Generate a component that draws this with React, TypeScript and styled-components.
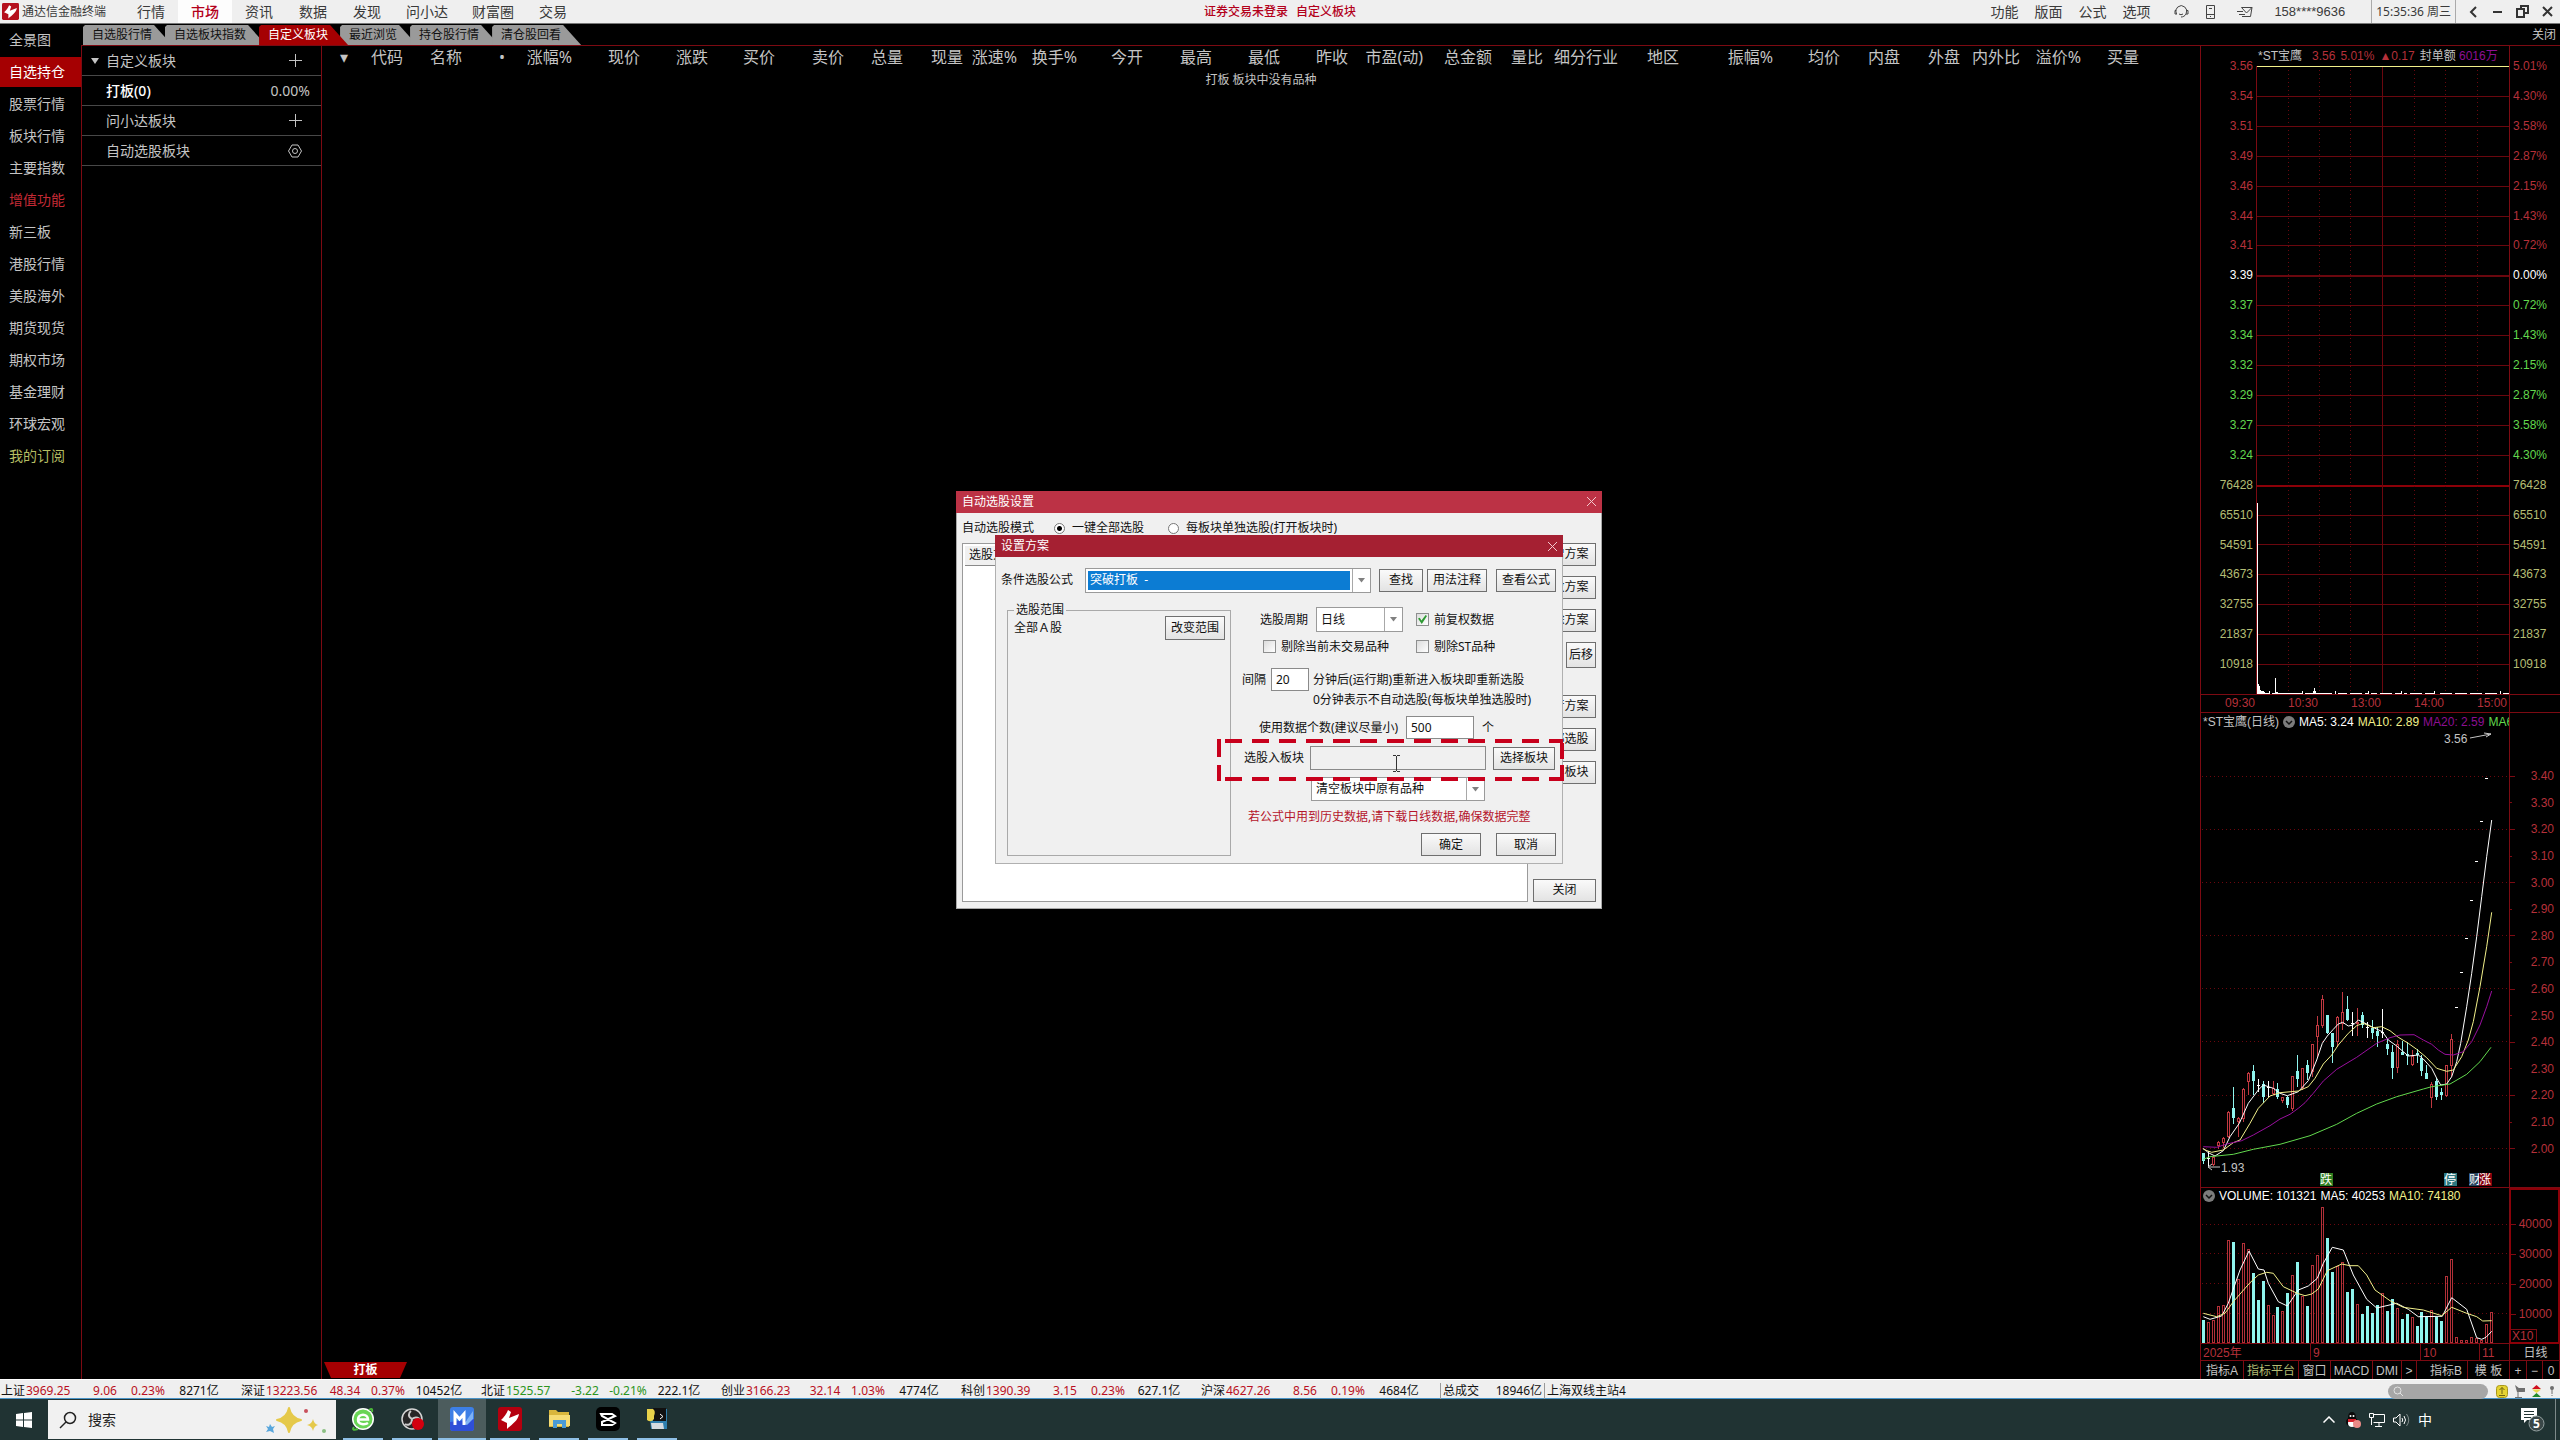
import React from "react";
import styled, { createGlobalStyle, css } from "styled-components";

const SANS = `"Noto Sans", "Noto Sans CJK SC", sans-serif`;
const PIXEL = `"Liberation Sans", "Noto Sans CJK SC", sans-serif`;
const C = {
  line: "#7c0a12",
  grid: "#6a070e",
  red: "#b5303a",
  green: "#62d84e",
  olive: "#b4bd74",
  yellow: "#f2f08a",
  magenta: "#8d0f93",
  cyan: "#8ff5ee",
  text: "#c4c4c4",
  face: "#f0f0f0",
  crimson: "#b3001b",
};

const GlobalStyle = createGlobalStyle`
  *, *::before, *::after { box-sizing: border-box; }
  body { margin: 0; background: #000; font-family: ${SANS}; font-size: 12px; line-height: 16px; color: ${C.text}; }
  button, input, select { font: inherit; color: inherit; margin: 0; padding: 0; }
  button { background: none; border: 0; }
  a { color: inherit; text-decoration: none; }
  ul { list-style: none; margin: 0; padding: 0; }
  svg { display: block; flex: none; }
`;

const Screen = styled.div`
  display: flex;
  flex-direction: column;
  height: 100vh;
  overflow: hidden;
  white-space: nowrap;
`;
const Terminal = styled.div`
  position: relative;
  flex: 1;
  min-height: 0;
  display: flex;
  flex-direction: column;
`;

/* title bar */
const TitleBar = styled.header`
  height: 24px;
  background: #efefef;
  border-bottom: 1px solid #777;
  color: #3a3a3a;
  display: grid;
  grid-template-columns: 1fr auto 1fr;
  align-items: center;
`;
const Brand = styled.div`
  display: flex;
  align-items: center;
  gap: 3px;
  padding-left: 2px;
  width: 124px;
`;
const BarGroup = styled.div<{ $end?: boolean }>`
  display: flex;
  align-items: center;
  height: 23px;
  ${(p) => p.$end && "justify-content: flex-end;"}
`;
const MenuItem = styled.button<{ $wide?: boolean; $active?: boolean }>`
  width: ${(p) => (p.$wide ? 66 : 54)}px;
  height: 23px;
  font-size: 14px;
  ${(p) => p.$active && css`background: #fdfdfd; color: ${C.crimson}; font-weight: 500;`}
`;
const LoginNote = styled.div`
  color: ${C.crimson};
  font-weight: 500;
  display: flex;
  gap: 8px;
`;
const ToolLink = styled.button`
  width: 44px;
  font-size: 14px;
`;
const IconButton = styled.button<{ $w?: number }>`
  width: ${(p) => p.$w ?? 25}px;
  height: 23px;
  display: grid;
  place-items: center;
`;
const Account = styled.span`
  font: 13px/22px ${PIXEL};
  padding: 0 26px 0 10px;
`;
const Clock = styled.time`
  line-height: 23px;
  padding: 0 4px;
  border: solid #aaa;
  border-width: 0 1px;
  margin-right: 4px;
`;

/* body */
const Body = styled.div`
  flex: 1;
  min-height: 0;
  display: flex;
`;
const Nav = styled.nav`
  width: 81px;
  flex: none;
  padding-top: 1px;
`;
const NavLink = styled.a<{ $active?: boolean; $color?: string }>`
  display: block;
  height: 30px;
  margin-bottom: 2px;
  padding-left: 9px;
  font-size: 14px;
  line-height: 30px;
  color: ${(p) => p.$color ?? C.text};
  ${(p) => p.$active && "background: #a50002; color: #fff;"}
`;
const Work = styled.div`
  flex: 1;
  min-width: 0;
  display: flex;
  flex-direction: column;
`;
const TabBar = styled.div`
  height: 22px;
  border-bottom: 1px solid ${C.line};
  display: flex;
  align-items: flex-end;
  padding: 0 4px 0 2px;
`;
const Tab = styled.button<{ $active?: boolean }>`
  position: relative;
  z-index: ${(p) => (p.$active ? 2 : 1)};
  height: 20px;
  padding: 0 20px 0 9px;
  margin-right: ${(p) => (p.$active ? -8 : -7)}px;
  background: ${(p) => (p.$active ? "#a50002" : "#9a9a9a")};
  color: ${(p) => (p.$active ? "#fff" : "#111")};
  clip-path: polygon(2px 0, calc(100% - 18px) 0, 100% 100%, 0 100%, 0 2px);
`;
const CloseLink = styled.button`
  margin-left: auto;
  height: 21px;
`;
const Panes = styled.div`
  flex: 1;
  min-height: 0;
  display: flex;
  border-left: 1px solid ${C.line};
`;

const Blocks = styled.aside`
  width: 240px;
  flex: none;
  border-right: 1px solid ${C.line};
`;
const BlockRow = styled.div<{ $strong?: boolean }>`
  height: 30px;
  border-bottom: 1px solid #484848;
  display: flex;
  align-items: center;
  padding: 0 11px 0 7px;
  font-size: 14px;
  color: ${(p) => (p.$strong ? "#fff" : C.text)};
  font-weight: ${(p) => (p.$strong ? 500 : 400)};
`;
const Caret = styled.span`
  width: 17px;
  flex: none;
`;
const RowEnd = styled.span<{ $icon?: boolean }>`
  margin-left: auto;
  margin-right: ${(p) => (p.$icon ? 8 : 0)}px;
  font-weight: 400;
  color: ${C.text};
`;

const Quotes = styled.main`
  flex: 1;
  min-width: 0;
  display: flex;
  flex-direction: column;
  justify-content: space-between;
`;
const QuoteTable = styled.table`
  width: 100%;
  table-layout: fixed;
  border-collapse: collapse;
  th { padding: 0; height: 22px; font-size: 16px; line-height: 22px; font-weight: 400; text-align: right; }
  td { padding: 4px 0; text-align: center; }
`;
const BlockTab = styled.button`
  margin: 0 0 1px 2px;
  width: 83px;
  height: 16px;
  line-height: 16px;
  background: #a50002;
  color: #fff;
  font-weight: 700;
  clip-path: polygon(0 0, 100% 0, calc(100% - 7px) 100%, 7px 100%);
`;

/* chart column */
const Charts = styled.section`
  width: 360px;
  flex: none;
  border-left: 1px solid ${C.line};
  display: flex;
  flex-direction: column;
  font-family: ${PIXEL};
`;
const ChartHead = styled.div<{ $h: number; $indent: number; $gap: number }>`
  height: ${(p) => p.$h}px;
  width: 309px;
  padding-left: ${(p) => p.$indent}px;
  border-right: 1px solid ${C.line};
  overflow: hidden;
  display: flex;
  align-items: center;
  gap: ${(p) => p.$gap}px;
`;
const Ink = styled.span<{ $c: string }>`
  color: ${(p) => p.$c};
`;
const Intraday = styled.div`
  flex: 1;
  min-height: 0;
  display: flex;
`;
const Levels = styled.ul<{ $left?: boolean }>`
  width: ${(p) => (p.$left ? 55 : 50)}px;
  margin: -8px 0 8px;
  display: flex;
  flex-direction: column;
  text-align: ${(p) => (p.$left ? "right" : "left")};
  padding: ${(p) => (p.$left ? "0 3px 0 0" : "0 0 0 3px")};
`;
const Level = styled.li<{ $c: string }>`
  flex: 1;
  color: ${(p) => p.$c};
`;
const PlotBox = styled.div`
  width: 254px;
  border: solid ${C.line};
  border-width: 0 1px;
  svg { width: 100%; height: 100%; }
`;
const TimeRow = styled.div`
  height: 19px;
  border: solid ${C.line};
  border-width: 1px 0;
  color: ${C.red};
  display: flex;
  span { width: 63px; padding-left: 24px; line-height: 17px; }
  span:last-child { width: 57px; border-right: 1px solid ${C.line}; }
`;
const PlotRow = styled.div<{ $h: number }>`
  height: ${(p) => p.$h}px;
  display: flex;
`;
const PlotPane = styled.div`
  width: 309px;
  flex: none;
  border-right: 1px solid ${C.line};
`;
const VolumeList = styled.ul`
  flex: 1;
  padding: 19px 6px 0 0;
  color: ${C.red};
  text-align: right;
  li { display: flex; align-items: center; justify-content: space-between; height: 30px; }
  li::before { content: ""; width: 5px; border-top: 1px solid ${C.line}; }
`;
const PriceList = styled.ul`
  height: 431px;
  flex: 1;
  padding: 32px 6px 0 0;
  color: ${C.red};
  display: flex;
  flex-direction: column;
  li { flex: 1; display: flex; align-items: center; justify-content: space-between; }
  li::before { content: ""; width: 5px; border-top: 1px solid ${C.line}; }
  li:nth-child(even)::before { width: 2px; }
`;
const VolumeBlock = styled.div`
  display: flex;
  border-top: 1px solid ${C.line};
`;
const VolumeAxis = styled.div`
  flex: 1;
  border: 2px solid #8c0008;
  border-left-width: 1px;
  display: flex;
  flex-direction: column;
`;
const Unit = styled.span`
  width: 26px;
  height: 13px;
  padding-left: 1px;
  border: solid ${C.line};
  border-width: 1px 1px 0 0;
  color: ${C.red};
  line-height: 12px;
`;
const DateRow = styled.div`
  height: 16px;
  display: flex;
  color: ${C.red};
`;
const DateCell = styled.span<{ $w?: number }>`
  ${(p) => (p.$w ? `width: ${p.$w}px;` : "flex: 1; text-align: center; color: #c4c4c4;")}
  padding-left: 2px;
  border-right: 1px solid ${C.line};
  line-height: 18px;
`;
const ToolRow = styled.div`
  height: 19px;
  display: flex;
  border-top: 1px solid ${C.line};
`;
const Tool = styled.button<{ $w: number; $c?: string }>`
  width: ${(p) => p.$w}px;
  padding-top: 2px;
  border-right: 1px solid ${C.line};
  color: ${(p) => p.$c ?? C.text};
`;

/* status bar and task bar */
const StatusBar = styled.footer`
  height: 20px;
  padding-top: 4px;
  background: #efefef;
  border-top: 1px solid #fff;
  border-bottom: 1px solid #4a94c8;
  color: #111;
  display: flex;
  align-items: center;
  line-height: 16px;
`;
const IndexItem = styled.div<{ $c: string }>`
  width: 240px;
  display: grid;
  grid-template-columns: 26px 58px 42px 44px 58px;
  text-align: center;
  color: ${(p) => p.$c};
  b { font-weight: 400; color: #111; }
  span:nth-child(2) { text-align: left; }
`;
const StatusCell = styled.span<{ $w: number }>`
  width: ${(p) => p.$w}px;
  padding: 0 2px;
  border-left: 1px solid #999;
  display: flex;
  justify-content: space-between;
`;
const StatusTools = styled.div`
  margin-left: auto;
  display: flex;
  align-items: center;
  gap: 6px;
  padding-right: 1px;
`;
const Pill = styled.button`
  width: 100px;
  height: 15px;
  margin-right: 2px;
  padding-left: 5px;
  border-radius: 8px;
  background: #a6a6a6;
  display: flex;
  align-items: center;
`;
const TaskBar = styled.footer`
  height: 41px;
  background: #203333;
  display: flex;
  align-items: stretch;
`;
const Start = styled.button`
  width: 48px;
  display: grid;
  place-items: center;
`;
const Search = styled.label`
  width: 288px;
  margin: 1px 0;
  background: #f1f1f1;
  color: #222;
  display: flex;
  align-items: center;
  padding: 0 8px 0 11px;
  font-size: 14px;
  input { flex: 1; min-width: 0; border: 0; outline: 0; background: none; padding-left: 11px; }
  input::placeholder { color: #222; opacity: 1; }
`;
const Apps = styled.div`
  display: flex;
  padding-left: 3px;
`;
const AppButton = styled.button<{ $on?: boolean }>`
  width: ${(p) => (p.$on ? 48 : 40)}px;
  margin: ${(p) => (p.$on ? "0 0 0 1px" : "0 5px 0 4px")};
  border-bottom: 2px solid #8fc0e6;
  background: ${(p) => (p.$on ? "#4c5c5d" : "none")};
  display: grid;
  place-items: center;
`;
const Tray = styled.div`
  margin-left: auto;
  display: flex;
  align-items: center;
`;
const TrayItem = styled.button<{ $wide?: boolean }>`
  width: ${(p) => (p.$wide ? 118 : 24)}px;
  height: 41px;
  padding-right: ${(p) => (p.$wide ? 8 : 0)}px;
  display: grid;
  place-items: center;
  justify-items: ${(p) => (p.$wide ? "end" : "center")};
  color: #fff;
  font-size: 14px;
`;
const Desktop = styled.button`
  width: 5px;
  height: 41px;
  border-left: 1px solid #7d8989;
`;

/* dialogs */
const Overlay = styled.div`
  position: absolute;
  z-index: 10;
  inset: 0 2px -20px 0;
  display: grid;
  place-items: center;
  color: #111;
  pointer-events: none;
  > * { grid-area: 1 / 1; pointer-events: auto; }
`;
const Dialog = styled.section<{ $w: number; $edge: string }>`
  position: relative;
  width: ${(p) => p.$w}px;
  background: ${C.face};
  border: 1px solid ${(p) => p.$edge};
  border-top: 0;
`;
const DialogTitle = styled.h2<{ $bg: string }>`
  margin: 0 -1px;
  height: 22px;
  padding: 0 6px;
  background: ${(p) => p.$bg};
  color: #fff;
  font-size: 12px;
  font-weight: 400;
  line-height: 22px;
  display: flex;
  align-items: center;
  justify-content: space-between;
`;
const ModeRow = styled.fieldset`
  border: 0;
  margin: 0;
  padding: 1px 5px 0;
  height: 30px;
  display: flex;
  align-items: center;
`;
const ModeLabel = styled.span`
  width: 92px;
`;
const Choice = styled.label<{ $w?: number }>`
  display: flex;
  align-items: center;
  gap: ${(p) => (p.$w ? 7 : 5)}px;
  ${(p) => p.$w && `width: ${p.$w}px;`}
`;
const Radio = styled.input`
  appearance: none;
  width: 11px;
  height: 11px;
  border: 1px solid #777;
  border-radius: 50%;
  background: #fff;
  &:checked { background: radial-gradient(#000 0 2px, #fff 3px); }
`;
const Check = styled.input`
  appearance: none;
  width: 13px;
  height: 13px;
  border: 1px solid #8e8f8f;
  background: linear-gradient(135deg, #dcdcdc, #fff);
  &:checked::before {
    content: "";
    display: block;
    width: 9px;
    height: 9px;
    margin: 1px;
    background: #2e9a33;
    clip-path: polygon(0 40%, 20% 30%, 38% 62%, 85% 0, 100% 10%, 42% 100%);
  }
`;
const OuterBody = styled.div`
  display: flex;
  gap: 5px;
  padding: 0 5px 6px;
  height: 365px;
`;
const PlanList = styled.div`
  flex: 1;
  border: 1px solid #9a9a9a;
  background: #fff;
  padding: 2px;
`;
const PlanHead = styled.button`
  width: 120px;
  height: 20px;
  padding-left: 4px;
  text-align: left;
  background: ${C.face};
  border-bottom: 1px solid #8a8a8a;
`;
const SideButtons = styled.div`
  width: 63px;
  display: flex;
  flex-direction: column;
  gap: 10px;
  > :last-child { margin-top: auto; }
`;
const MoveRow = styled.div`
  display: flex;
  justify-content: space-between;
  margin-bottom: 17px;
`;
const Push = styled.button<{ $w?: number; $h?: number }>`
  ${(p) => (p.$w ? `width: ${p.$w}px;` : "")}
  height: ${(p) => p.$h ?? 23}px;
  border: 1px solid #6f6f6f;
  background: linear-gradient(#fafafa, #e3e3e3);
  color: #111;
`;
const FormulaRow = styled.div`
  display: flex;
  align-items: center;
  padding: 0 6px 0 5px;
  height: 26px;
  margin-top: 10px;
  > label { width: 84px; }
`;
const Gap = styled.span<{ $w: number }>`
  width: ${(p) => p.$w}px;
`;
const Combo = styled.span<{ $w: number; $h?: number }>`
  width: ${(p) => p.$w}px;
  height: ${(p) => p.$h ?? 25}px;
  border: 1px solid #9a9a9a;
  background: #fff;
  display: flex;
  align-items: center;
`;
const Select = styled.select<{ $selected?: boolean }>`
  appearance: none;
  flex: 1;
  min-width: 0;
  height: ${(p) => (p.$selected ? 19 : 22)}px;
  margin: 0 2px;
  padding-left: 2px;
  border: 0;
  border-radius: 0;
  outline: 0;
  background: ${(p) => (p.$selected ? "#0c7cd3" : "#fff")};
  color: ${(p) => (p.$selected ? "#fff" : "#111")};
`;
const Drop = styled.span`
  width: 18px;
  align-self: stretch;
  border-left: 1px solid #a8a8a8;
  display: grid;
  place-items: center;
`;
const InnerBody = styled.div`
  display: flex;
  gap: 9px;
  padding: 0 6px 7px 11px;
  margin-top: 9px;
`;
const Scope = styled.fieldset`
  width: 224px;
  margin: 0;
  padding: 0 5px 0 6px;
  border: 1px solid #a9a9a9;
  legend { padding: 0 2px; }
`;
const ScopeRow = styled.div`
  display: flex;
  justify-content: space-between;
  align-items: center;
  margin-top: -2px;
`;
const Form = styled.div`
  flex: 1;
  padding-top: 5px;
  display: flex;
  flex-direction: column;
  gap: 7px;
`;
const FormRow = styled.div<{ $h: number; $indent?: number; $after?: number }>`
  height: ${(p) => p.$h}px;
  margin-bottom: ${(p) => p.$after ?? 0}px;
  padding-left: ${(p) => p.$indent ?? 0}px;
  display: flex;
  align-items: center;
`;
const Cell = styled.span<{ $w: number }>`
  width: ${(p) => p.$w}px;
`;
const Pair = styled.div``;
const Hint = styled.p`
  margin: 0;
  padding-left: 73px;
  line-height: 18px;
`;
const Warning = styled.p`
  margin: 0;
  padding-left: 8px;
  line-height: 18px;
  color: #b5142b;
`;
const TextBox = styled.input<{ $w: number; $gray?: boolean }>`
  width: ${(p) => p.$w}px;
  height: ${(p) => (p.$gray ? 24 : 23)}px;
  border: 1px solid #8a8a8a;
  background: ${(p) => (p.$gray ? C.face : "#fff")};
  padding-left: 4px;
  border-radius: 0;
`;
const Footer = styled.div`
  display: flex;
  justify-content: flex-end;
  gap: 15px;
`;
const Marker = styled.svg`
  position: absolute;
  left: 219px;
  top: 202px;
  pointer-events: none;
`;
const Beam = styled.svg`
  position: absolute;
  left: 397px;
  top: 220px;
  pointer-events: none;
`;

/* data */
const columns: [string, number][] = [
  ["▾", 26], ["代码", 55], ["名称", 59], ["•", 43], ["涨幅%", 67], ["现价", 68], ["涨跌", 68], ["买价", 67],
  ["卖价", 69], ["总量", 59], ["现量", 60], ["涨速%", 54], ["换手%", 60], ["今开", 66], ["最高", 69], ["最低", 68],
  ["昨收", 68], ["市盈(动)", 75], ["总金额", 69], ["量比", 51], ["细分行业", 75], ["地区", 61], ["振幅%", 94],
  ["均价", 67], ["内盘", 60], ["外盘", 60], ["内外比", 60], ["溢价%", 61], ["买量", 58],
];

const indices = [
  ["上证", "3969.25", "9.06", "0.23%", "8271亿"],
  ["深证", "13223.56", "48.34", "0.37%", "10452亿"],
  ["北证", "1525.57", "-3.22", "-0.21%", "222.1亿"],
  ["创业", "3166.23", "32.14", "1.03%", "4774亿"],
  ["科创", "1390.39", "3.15", "0.23%", "627.1亿"],
  ["沪深", "4627.26", "8.56", "0.19%", "4684亿"],
];

const prices = ["3.56", "3.54", "3.51", "3.49", "3.46", "3.44", "3.41", "3.39", "3.37", "3.34", "3.32", "3.29", "3.27", "3.24"];
const percents = ["5.01%", "4.30%", "3.58%", "2.87%", "2.15%", "1.43%", "0.72%", "0.00%", "0.72%", "1.43%", "2.15%", "2.87%", "3.58%", "4.30%"];
const volumes = ["76428", "65510", "54591", "43673", "32755", "21837", "10918"];
const levelColor = (i: number) => (i < 7 ? C.red : i === 7 ? "#fff" : i < 14 ? C.green : C.olive);

/* kind, high, body top, body bottom, low: in thirds of a pixel */
const candles: [string, number, number, number, number][] = [
  ["c", 1178, 1180, 1202, 1212], ["w", 1172, 1195, 1195, 1222], ["r", 1188, 1190, 1214, 1218], ["r", 1143, 1147, 1157, 1168],
  ["r", 1130, 1133, 1148, 1165], ["r", 1053, 1055, 1132, 1133], ["c", 982, 1045, 1073, 1092], ["r", 1070, 1075, 1085, 1130],
  ["r", 985, 988, 1078, 1085], ["r", 937, 940, 965, 1005], ["c", 915, 933, 962, 1005], ["w", 957, 975, 975, 995],
  ["c", 962, 972, 1010, 1028], ["w", 962, 980, 980, 1010], ["r", 962, 985, 1003, 1005], ["c", 970, 987, 1010, 1018],
  ["r", 1010, 1012, 1022, 1028], ["c", 1008, 1011, 1035, 1043], ["r", 947, 949, 1047, 1052], ["c", 885, 933, 957, 980],
  ["r", 923, 925, 985, 990], ["c", 900, 915, 938, 960], ["r", 852, 853, 935, 950], ["r", 768, 796, 830, 895],
  ["r", 706, 718, 797, 803], ["c", 765, 766, 820, 822], ["c", 818, 820, 860, 908], ["r", 768, 772, 845, 862],
  ["r", 697, 757, 793, 810], ["c", 708, 747, 780, 782], ["w", 755, 790, 790, 827], ["r", 745, 785, 792, 827],
  ["c", 755, 765, 795, 805], ["w", 785, 800, 800, 835], ["c", 780, 803, 820, 837], ["c", 800, 812, 828, 860],
  ["w", 747, 815, 815, 835], ["c", 835, 852, 867, 885], ["c", 855, 877, 924, 957], ["r", 840, 852, 925, 938],
  ["c", 843, 876, 885, 886], ["c", 845, 882, 888, 915], ["r", 870, 887, 916, 917], ["c", 868, 880, 884, 908],
  ["c", 885, 895, 933, 947], ["c", 915, 938, 956, 958], ["r", 965, 972, 1015, 1045], ["c", 955, 963, 1010, 1020],
  ["c", 985, 995, 1005, 1020], ["r", 915, 916, 1007, 1012], ["r", 822, 837, 917, 950],
];
const limitTicks = [742, 637, 535, 421, 304, 184, 55];
const volumeTops = [
  450, 457, 449, 409, 405, 211, 216, 327, 220, 238, 309, 390, 333, 405, 436, 411, 424, 369, 316, 276, 379, 408, 286, 256, 112,
  204, 306, 289, 277, 366, 357, 403, 432, 408, 429, 405, 370, 423, 387, 415, 447, 432, 441, 468, 426, 441, 421, 441, 453, 319,
  268, 500, 510, 510, 502, 505, 510, 463, 427,
];
const volumeDown = new Set([0, 6, 10, 11, 12, 15, 17, 19, 21, 25, 26, 29, 30, 32, 33, 34, 35, 37, 38, 40, 41, 43, 44, 45, 47, 48]);

const priceLines: [string, number[]][] = [
  ["#fff", [40, 1165, 55, 1178, 75, 1188, 100, 1172, 120, 1130, 148, 1090, 175, 1030, 205, 990, 220, 975, 250, 985, 270, 1000, 292, 1007, 325, 995, 355, 962, 380, 900, 397, 850, 412, 828, 430, 808, 445, 792, 458, 787, 475, 798, 490, 795, 505, 780, 520, 787, 545, 800, 577, 815, 595, 840, 620, 858, 655, 888, 685, 885, 700, 897, 725, 925, 740, 955, 752, 975, 770, 972, 785, 950, 800, 905, 812, 850, 830, 740, 845, 640, 860, 530, 875, 410, 890, 290, 905, 180]],
  [C.yellow, [40, 1168, 65, 1177, 100, 1170, 130, 1148, 150, 1140, 180, 1090, 205, 1045, 240, 1008, 270, 998, 325, 993, 355, 980, 375, 955, 400, 912, 425, 885, 445, 855, 475, 820, 500, 797, 520, 790, 550, 803, 575, 800, 600, 812, 625, 832, 655, 850, 680, 868, 710, 893, 740, 925, 770, 934, 790, 930, 815, 890, 835, 840, 850, 785, 870, 680, 890, 560, 905, 457]],
  ["#9a109f", [40, 1160, 80, 1162, 110, 1152, 155, 1142, 190, 1125, 240, 1097, 270, 1077, 300, 1063, 325, 1045, 345, 1028, 370, 1000, 400, 963, 440, 928, 500, 892, 560, 850, 600, 833, 630, 825, 672, 824, 700, 840, 725, 853, 745, 870, 765, 883, 790, 885, 820, 875, 845, 845, 870, 795, 890, 740, 905, 693]],
  [C.green, [40, 1198, 60, 1190, 130, 1183, 190, 1168, 270, 1153, 360, 1127, 440, 1093, 500, 1060, 560, 1032, 620, 1010, 700, 987, 725, 980, 780, 972, 830, 943, 870, 905, 903, 862]],
];
const volumeLines: [string, number[]][] = [
  ["#fff", [40, 440, 60, 448, 95, 438, 115, 400, 150, 300, 177, 243, 205, 297, 222, 300, 235, 340, 265, 395, 292, 408, 325, 360, 355, 348, 382, 325, 400, 280, 427, 232, 460, 240, 490, 315, 530, 388, 560, 414, 620, 400, 655, 418, 685, 440, 757, 439, 785, 383, 830, 418, 860, 503, 875, 508, 888, 502, 905, 484]],
  [C.yellow, [40, 430, 80, 440, 105, 430, 130, 395, 180, 338, 205, 315, 230, 307, 250, 310, 280, 350, 322, 370, 345, 377, 365, 372, 385, 357, 412, 302, 455, 282, 480, 287, 505, 287, 530, 315, 555, 360, 600, 392, 640, 412, 700, 420, 755, 437, 785, 412, 830, 430, 860, 440, 878, 453, 905, 452]],
];

const candleX = (i: number) => Math.round(2 + (i * 288) / 58);
const priceY = (v: number) => Math.round(v / 3) + 29;
const volumeY = (v: number) => Math.round(v / 3) - 34;
const toPoints = (list: number[], dy: number) =>
  list.reduce((s, v, i) => s + (i % 2 ? `${(v / 3 + dy).toFixed(1)} ` : `${(v / 3 - 11).toFixed(1)},`), "");

/* drawings */
const Flame = ({ size }: { size: number }) => (
  <svg width={size} height={size} viewBox="0 0 24 24">
    <rect width="24" height="24" rx="2" fill="#b5101d" />
    <path d="M10 3 L13 5 L11 11 L21 7 C20 14 14 17 9 22 L9 16 L3 13 C6 10 8 8 10 3Z" fill="#fff" />
  </svg>
);
const Plus = () => (
  <svg width="13" height="13"><path d="M6.5 0V13M0 6.5H13" stroke="#c4c4c4" fill="none" /></svg>
);
const Cross = () => (
  <svg width="9" height="9"><path d="M0 0L9 9M9 0L0 9" stroke="#f3c9ce" fill="none" /></svg>
);
const ArrowDown = () => (
  <svg width="7" height="5"><path d="M0 0H7L3.5 4.5Z" fill="#808080" /></svg>
);
const Toggle = () => (
  <svg width="12" height="12">
    <circle cx="6" cy="6" r="6" fill="#7c7c7c" />
    <path d="M3 5L6 8L9 5" stroke="#111" strokeWidth="1.5" fill="none" />
  </svg>
);

const IntradayPlot = () => {
  const step = 628 / 21;
  const mini = Array.from({ length: 84 }, (_, i) => i).filter((i) => i < 24 || (i * 7) % 5 !== 0);
  return (
    <svg viewBox="0 0 252 628" preserveAspectRatio="none" shapeRendering="crispEdges">
      {Array.from({ length: 20 }, (_, k) => k + 1).map((k) => (
        <line key={k} x1="0" x2="252" y1={Math.round(k * step) + 0.5} y2={Math.round(k * step) + 0.5}
          stroke={k === 14 ? "#8c0008" : C.grid} strokeWidth={k === 7 || k === 14 ? 2 : 1} />
      ))}
      {[32, 63, 94, 126, 158, 189, 221].map((x) => (
        <line key={x} x1={x - 0.5} x2={x - 0.5} y1="0" y2="628" stroke={C.grid} strokeDasharray={x === 126 ? undefined : "1 3"} />
      ))}
      <line x1="0" x2="252" y1="0.5" y2="0.5" stroke={C.yellow} />
      <path d="M0 437H1V617L3 621V624L8 626V628H0ZM18 612H19V626H21V628H18ZM56 625H57V622H58V625H59V628H56Z" fill="#fff" />
      {mini.map((i) => (
        <rect key={i} x={i * 3} y={i % 11 === 4 ? 625 : 627} width={i % 11 === 4 ? 1 : 3} height={i % 11 === 4 ? 3 : 1} fill="#fff" />
      ))}
    </svg>
  );
};

const Badge = ({ x, text, fill }: { x: number; text: string; fill: string }) => (
  <g>
    <rect x={x} y="442" width="13" height="13" fill={fill} />
    <text x={x} y="453" fontSize="12" fill="#fff">{text}</text>
  </g>
);

const DailyPlot = () => (
  <svg width="308" height="456" viewBox="0 0 308 456">
    {[45, 98, 151, 204, 257, 310, 364, 417].map((y) => (
      <line key={y} x1="1" x2="308" y1={y + 0.5} y2={y + 0.5} stroke={C.grid} strokeDasharray="1 3" />
    ))}
    <g shapeRendering="crispEdges">
      {candles.map(([kind, hi, top, bottom, lo], i) => {
        const x = candleX(i);
        const [h, t, b, l] = [hi, top, bottom, lo].map(priceY);
        if (kind === "r")
          return <path key={i} d={`M${x + 0.5} ${h}V${t}M${x + 0.5} ${b}V${l}M${x - 0.5} ${t + 0.5}H${x + 1.5}V${b - 0.5}H${x - 0.5}Z`} stroke="#c03840" fill="none" />;
        if (kind === "w")
          return <path key={i} d={`M${x + 0.5} ${h}V${l}M${x - 1} ${t + 0.5}H${x + 2}`} stroke="#fff" fill="none" />;
        return (
          <g key={i} fill={C.cyan}>
            <rect x={x} y={h} width="1" height={l - h} />
            <rect x={x - 1} y={t} width="3" height={Math.max(1, b - t)} />
          </g>
        );
      })}
      {limitTicks.map((v, k) => (
        <rect key={v} x={candleX(51 + k) - 1} y={priceY(v)} width="3" height="1" fill="#fff" />
      ))}
    </g>
    {priceLines.map(([color, list]) => (
      <polyline key={color} points={toPoints(list, 29)} fill="none" stroke={color} />
    ))}
    <path d="M269 7L290 3M283 2L290 3L285 6" stroke={C.text} fill="none" />
    <text x="243" y="12" fontSize="12" fill={C.text}>3.56</text>
    <path d="M19 436H7M11 433L7 436L11 439" stroke={C.text} fill="none" />
    <text x="20" y="441" fontSize="12" fill={C.text}>1.93</text>
    <Badge x={119} text="跌" fill="#2f7d20" />
    <Badge x={243} text="停" fill="#2d7880" />
    <Badge x={268} text="财" fill="#29455f" />
    <Badge x={278} text="涨" fill="#84000c" />
  </svg>
);

const VolumePlot = () => (
  <svg width="308" height="140" viewBox="0 0 308 140">
    {[20, 49, 79, 109].map((y) => (
      <line key={y} x1="1" x2="308" y1={y + 0.5} y2={y + 0.5} stroke={C.grid} strokeDasharray="1 3" />
    ))}
    <g shapeRendering="crispEdges">
      {volumeTops.map((v, i) => {
        const x = candleX(i);
        const y = volumeY(v);
        return volumeDown.has(i) ? (
          <rect key={i} x={x - 1} y={y} width="3" height={139 - y} fill={C.cyan} />
        ) : (
          <rect key={i} x={x - 0.5} y={y + 0.5} width="2" height={Math.max(1, 138 - y)} stroke="#b23038" fill="none" />
        );
      })}
    </g>
    {volumeLines.map(([color, list]) => (
      <polyline key={color} points={toPoints(list, -34)} fill="none" stroke={color} />
    ))}
    <path d="M0 139.5H308" stroke={C.line} />
  </svg>
);

const navItems: { text: string; color?: string; active?: boolean }[] = [
  { text: "全景图" }, { text: "自选持仓", active: true }, { text: "股票行情" }, { text: "板块行情" }, { text: "主要指数" },
  { text: "增值功能", color: "#c42a35" }, { text: "新三板" }, { text: "港股行情" }, { text: "美股海外" }, { text: "期货现货" },
  { text: "期权市场" }, { text: "基金理财" }, { text: "环球宏观" }, { text: "我的订阅", color: "#b4bd63" },
];

const Header = () => (
  <TitleBar>
    <BarGroup>
      <Brand><Flame size={17} />通达信金融终端</Brand>
      {["行情", "市场", "资讯", "数据", "发现", "问小达", "财富圈", "交易"].map((t) => (
        <MenuItem key={t} $wide={t.length === 3} $active={t === "市场"}>{t}</MenuItem>
      ))}
    </BarGroup>
    <LoginNote><span>证券交易未登录</span><span>自定义板块</span></LoginNote>
    <BarGroup $end>
      {["功能", "版面", "公式", "选项"].map((t) => <ToolLink key={t}>{t}</ToolLink>)}
      <Gap $w={8} />
      <IconButton $w={30} aria-label="客服">
        <svg width="15" height="14" fill="none" stroke="#444">
          <path d="M2.5 9A5.5 5.5 0 1 1 12 9M2.5 5.5H1V9H3M12 5.5H14V9H12C11 11 9 12 7 12M5 9Q7 10.5 9 9" />
        </svg>
      </IconButton>
      <IconButton $w={30} aria-label="手机">
        <svg width="10" height="14" fill="none" stroke="#444"><path d="M0.5 0.5H8.5V13.5H0.5ZM0.5 9.5H8.5M3 3.5H6M4 11.5H5" /></svg>
      </IconButton>
      <IconButton $w={38} aria-label="邮件">
        <svg width="16" height="12" fill="none" stroke="#444"><path d="M4.5 1.5H15L13.5 10.5H5M4.5 1.5L9.5 7L15 1.5M0 5.5H6M2 8.5H8" /></svg>
      </IconButton>
      <Account>158****9636</Account>
      <Clock>15:35:36 周三</Clock>
      <IconButton aria-label="收起"><svg width="8" height="12"><path d="M7 1L2 6L7 11" stroke="#333" strokeWidth="2" fill="none" /></svg></IconButton>
      <IconButton aria-label="最小化"><svg width="9" height="2"><rect width="9" height="2" fill="#333" /></svg></IconButton>
      <IconButton aria-label="还原"><svg width="13" height="13" fill="none" stroke="#333" strokeWidth="2"><path d="M1 4H8V12H1ZM5 4V1H12V8H8" /></svg></IconButton>
      <IconButton aria-label="退出"><svg width="11" height="11"><path d="M1 1L10 10M10 1L1 10" stroke="#333" strokeWidth="2" /></svg></IconButton>
    </BarGroup>
  </TitleBar>
);

const ChartColumn = () => (
  <Charts>
    <ChartHead $h={20} $indent={57} $gap={5}>
      <Ink $c={C.text}>*ST宝鹰</Ink><Gap $w={0} />
      <Ink $c={C.red}>3.56</Ink><Ink $c={C.red}>5.01%</Ink><Ink $c={C.red}>▲0.17</Ink>
      <span>封单额<Ink $c={C.magenta}> 6016万</Ink></span>
    </ChartHead>
    <Intraday>
      <Levels $left>
        {[...prices, ...volumes].map((t, i) => <Level key={i} $c={levelColor(i)}>{t}</Level>)}
      </Levels>
      <PlotBox><IntradayPlot /></PlotBox>
      <Levels>
        {[...percents, ...volumes].map((t, i) => <Level key={i} $c={levelColor(i)}>{t}</Level>)}
      </Levels>
    </Intraday>
    <TimeRow>{["09:30", "10:30", "13:00", "14:00", "15:00"].map((t) => <span key={t}>{t}</span>)}</TimeRow>
    <ChartHead $h={18} $indent={2} $gap={4}>
      <span>*ST宝鹰(日线)</span><Toggle />
      <Ink $c="#fff">MA5: 3.24</Ink><Ink $c={C.yellow}>MA10: 2.89</Ink><Ink $c={C.magenta}>MA20: 2.59</Ink><Ink $c={C.green}>MA60: 2.37</Ink>
    </ChartHead>
    <PlotRow $h={456}>
      <PlotPane><DailyPlot /></PlotPane>
      <PriceList>
        {Array.from({ length: 15 }, (_, i) => (3.4 - i / 10).toFixed(2)).map((t) => <li key={t}>{t}</li>)}
      </PriceList>
    </PlotRow>
    <VolumeBlock>
      <PlotPane>
        <ChartHead $h={16} $indent={2} $gap={4}>
          <Toggle /><Ink $c="#fff">VOLUME: 101321</Ink><Ink $c="#fff">MA5: 40253</Ink><Ink $c={C.yellow}>MA10: 74180</Ink>
        </ChartHead>
        <VolumePlot />
      </PlotPane>
      <VolumeAxis>
        <VolumeList>
          {["40000", "30000", "20000", "10000"].map((t) => <li key={t}>{t}</li>)}
        </VolumeList>
        <Unit>X10</Unit>
      </VolumeAxis>
    </VolumeBlock>
    <DateRow>
      <DateCell $w={110}>2025年</DateCell><DateCell $w={110}>9</DateCell><DateCell $w={59}>10</DateCell>
      <DateCell $w={30}>11</DateCell><DateCell>日线</DateCell>
    </DateRow>
    <ToolRow>
      <Tool $w={43}>指标A</Tool><Tool $w={55} $c={C.olive}>指标平台</Tool><Tool $w={32}>窗口</Tool><Tool $w={42}>MACD</Tool>
      <Tool $w={29}>DMI</Tool><Tool $w={15}>&gt;</Tool><Gap $w={8} /><Tool $w={43}>指标B</Tool><Tool $w={42}>模 板</Tool>
      <Tool $w={17}>+</Tool><Tool $w={16}>−</Tool><Tool $w={17}>0</Tool>
    </ToolRow>
  </Charts>
);

const Dialogs = () => (
  <Overlay>
    <Dialog $w={646} $edge="#a8a8a8" aria-label="自动选股设置">
      <DialogTitle $bg="#bc3245">自动选股设置<button aria-label="关闭窗口"><Cross /></button></DialogTitle>
      <ModeRow>
        <ModeLabel>自动选股模式</ModeLabel>
        <Choice $w={114}><Radio type="radio" name="mode" defaultChecked />一键全部选股</Choice>
        <Choice $w={180}><Radio type="radio" name="mode" />每板块单独选股(打开板块时)</Choice>
      </ModeRow>
      <OuterBody>
        <PlanList><PlanHead>选股方案</PlanHead></PlanList>
        <SideButtons>
          <Push>新增方案</Push><Push>修改方案</Push><Push>删除方案</Push>
          <MoveRow><Push $w={30} $h={26}>前移</Push><Push $w={30} $h={26}>后移</Push></MoveRow>
          <Push>执行方案</Push><Push>全部选股</Push><Push>查看板块</Push>
          <Push>关闭</Push>
        </SideButtons>
      </OuterBody>
    </Dialog>
    <Dialog $w={568} $edge="#b0b0b0" aria-label="设置方案">
      <DialogTitle $bg="#a52032">设置方案<button aria-label="关闭方案窗口"><Cross /></button></DialogTitle>
      <FormulaRow>
        <label htmlFor="formula">条件选股公式</label>
        <Combo $w={286}>
          <Select id="formula" $selected><option>{"突破打板\u00a0\u00a0-"}</option></Select><Drop><ArrowDown /></Drop>
        </Combo>
        <Gap $w={8} /><Push $w={44}>查找</Push><Gap $w={4} /><Push $w={60}>用法注释</Push><Gap $w={9} /><Push $w={60}>查看公式</Push>
      </FormulaRow>
      <InnerBody>
        <Scope>
          <legend>选股范围</legend>
          <ScopeRow><span>全部Ａ股</span><Push $w={60} $h={24}>改变范围</Push></ScopeRow>
        </Scope>
        <Form>
          <FormRow $h={25} $indent={20}>
            <Cell $w={56} as="label" htmlFor="period">选股周期</Cell>
            <Combo $w={87}><Select id="period"><option>日线</option></Select><Drop><ArrowDown /></Drop></Combo>
            <Gap $w={13} />
            <Choice><Check type="checkbox" defaultChecked />前复权数据</Choice>
          </FormRow>
          <FormRow $h={15} $indent={23} $after={7}>
            <Cell $w={153}><Choice><Check type="checkbox" />剔除当前未交易品种</Choice></Cell>
            <Choice><Check type="checkbox" />剔除ST品种</Choice>
          </FormRow>
          <Pair>
            <FormRow $h={23} $indent={2}>
              <Cell $w={29} as="label" htmlFor="interval">间隔</Cell>
              <TextBox id="interval" $w={38} defaultValue="20" /><Gap $w={4} />
              <span>分钟后(运行期)重新进入板块即重新选股</span>
            </FormRow>
            <Hint>0分钟表示不自动选股(每板块单独选股时)</Hint>
          </Pair>
          <FormRow $h={23} $indent={19}>
            <Cell $w={147} as="label" htmlFor="count">使用数据个数(建议尽量小)</Cell>
            <TextBox id="count" $w={68} defaultValue="500" /><Gap $w={8} />个
          </FormRow>
          <FormRow $h={24} $indent={4}>
            <Cell $w={66} as="label" htmlFor="target">选股入板块</Cell>
            <TextBox id="target" $w={176} $gray readOnly /><Gap $w={7} /><Push $w={62}>选择板块</Push>
          </FormRow>
          <FormRow $h={24} $indent={71}>
            <Combo $w={174} $h={24}>
              <Select aria-label="写入方式"><option>清空板块中原有品种</option></Select><Drop><ArrowDown /></Drop>
            </Combo>
          </FormRow>
          <Warning>若公式中用到历史数据,请下载日线数据,确保数据完整</Warning>
          <Footer><Push $w={60}>确定</Push><Push $w={60}>取消</Push></Footer>
        </Form>
      </InnerBody>
      <Marker width="350" height="46" viewBox="0 0 350 46">
        <path d="M10 4H348M10 42H348" stroke="#c8001c" strokeWidth="4" strokeDasharray="17 10" />
        <path d="M4 2V20M4 28V44M347 6V22M347 28V44" stroke="#c8001c" strokeWidth="4" />
      </Marker>
      <Beam width="7" height="17"><path d="M0 0.5H3M4 0.5H7M3.5 1V16M0 16.5H3M4 16.5H7" stroke="#333" fill="none" /></Beam>
    </Dialog>
  </Overlay>
);

const taskApps: { name: string; icon: React.ReactNode; on?: boolean }[] = [
  { name: "浏览器", icon: <><circle cx="12" cy="12" r="11" fill="#fff" /><circle cx="12" cy="12" r="9.5" fill="#6ad556" /><path d="M7 12.5H17C17 6 7 6 7 12.5C7 18 14 18 17 16" stroke="#fff" strokeWidth="2.5" fill="none" /><path d="M3 20Q0 24 7 22M18 3Q22 0 21 5" stroke="#4dbb3a" strokeWidth="2" fill="none" /></> },
  { name: "录屏", icon: <><circle cx="12" cy="12" r="10" fill="#262626" stroke="#d5d5d5" strokeWidth="1.5" /><path d="M12 12C8 10 8 6 11 4M12 12C16 9 20 11 20 14M12 12C12 17 8 19 5 17" stroke="#c9c9c9" strokeWidth="2" fill="none" /><circle cx="18" cy="17" r="6" fill="#d3000f" /></> },
  { name: "文档", on: true, icon: <><rect x="0" y="0" width="24" height="24" rx="3" fill="#3d7fe6" /><path d="M0 15L24 12V21Q24 24 21 24H3Q0 24 0 21Z" fill="#2f4fd8" /><path d="M14 17L23 4V12L17 18Z" fill="#7fb2f5" /><path d="M5 18V7L9.5 12L14 7V18" stroke="#fff" strokeWidth="3" fill="none" /></> },
  { name: "通达信", icon: <><rect width="24" height="24" rx="3" fill="#b5000f" /><path d="M10 3L13 5L11 11L21 7C20 14 14 17 9 22V16L3 13C6 10 8 8 10 3Z" fill="#fff" /></> },
  { name: "文件", icon: <><path d="M2 3H9L11 5H22V20H2Z" fill="#d9b63c" /><path d="M2 8H23V19H2Z" fill="#f6dc74" /><path d="M6 21V13H19V21H15V17H10V21Z" fill="#4a9bd6" /></> },
  { name: "剪映", icon: <><rect width="24" height="24" rx="5" fill="#000" /><path d="M5 7H16L19 9L6 15V18H16L19 16L6 9Z" stroke="#fff" strokeWidth="2" fill="none" /></> },
  { name: "终端", icon: <><path d="M4 2H22V22H6Z" fill="#2f7fae" /><path d="M8 1H21V14H8Z" fill="#111" /><path d="M15 7L18 9.5L15 12" stroke="#fff" fill="none" /><path d="M6 16H18L19 22H7Z" fill="#d5dbe0" /><path d="M2 2H8Q11 4 9 9V12Q6 16 2 13Z" fill="#e9d24a" /></> },
];

const Footers = () => (
  <>
    <StatusBar>
      {indices.map((r) => (
        <IndexItem key={r[0]} $c={r[2].startsWith("-") ? "#2c9420" : "#b90f22"}>
          <b>{r[0]}</b><span>{r[1]}</span><span>{r[2]}</span><span>{r[3]}</span><b>{r[4]}</b>
        </IndexItem>
      ))}
      <StatusCell $w={104}><span>总成交</span><span>18946亿</span></StatusCell>
      <StatusCell $w={90}>上海双线主站4</StatusCell>
      <StatusTools>
        <Pill aria-label="搜索行情"><svg width="10" height="10" fill="none" stroke="#e2e2e2"><circle cx="4.5" cy="4.5" r="3.5" /><path d="M7 7L10 10" /></svg></Pill>
        <svg width="12" height="13"><rect x="0.5" y="0.5" width="11" height="12" rx="3" fill="#e5d332" stroke="#a8981c" /><path d="M6 2.5V9M3.5 5L6 2.5L8.5 5M3 10.5H9" stroke="#6d6212" fill="none" /></svg>
        <svg width="12" height="13"><path d="M1 0L10 7H3ZM5 3H11V7L6 6Z" fill="#6f6f6f" /><path d="M4 7V12M1 12.5H8" stroke="#6f6f6f" /></svg>
        <svg width="9" height="13"><path d="M4.5 0L9 4H0Z" fill="#d01020" /><path d="M0 4.5H9L4.5 8Z" fill="#e8d84a" /><path d="M4.5 8L9 12H0Z" fill="#1f8a2c" /></svg>
        <svg width="12" height="13"><circle cx="5" cy="3" r="2" fill="#6f6f6f" /><path d="M5 4V9M5 10V11" stroke="#6f6f6f" /></svg>
      </StatusTools>
    </StatusBar>
    <TaskBar>
      <Start aria-label="开始"><svg width="16" height="16" fill="#fff"><path d="M0 2L7 1V7.5H0ZM8 1L16 0V7.5H8ZM0 8.5H7V15L0 14ZM8 8.5H16V16L8 15Z" /></svg></Start>
      <Search>
        <svg width="18" height="18" fill="none" stroke="#222" strokeWidth="1.5"><circle cx="11" cy="7" r="5.5" /><path d="M7 11L1 17" /></svg>
        <input type="search" placeholder="搜索" aria-label="搜索" />
        <svg width="64" height="28">
          <path d="M25 2Q27 12 37 14Q27 16 25 26Q23 16 13 14Q23 12 25 2Z" fill="#e5c94a" stroke="#e5c94a" strokeWidth="2" strokeLinejoin="round" />
          <path d="M49 13Q50 18 54 19Q50 20 49 25Q48 20 43 19Q48 18 49 13Z" fill="#e5c94a" />
          <path d="M6 18L8 21L11 20L9 23L10 27L6 25L2 26L4 23L2 20L5 21Z" fill="#58a6dc" />
          <circle cx="42" cy="5" r="2" fill="#c8505c" /><circle cx="60" cy="25" r="2" fill="#8cc084" />
        </svg>
      </Search>
      <Apps>
        {taskApps.map((a) => (
          <AppButton key={a.name} $on={a.on} aria-label={a.name}><svg width="24" height="24">{a.icon}</svg></AppButton>
        ))}
      </Apps>
      <Tray>
        <TrayItem aria-label="展开"><svg width="12" height="7"><path d="M0.5 6.5L6 1L11.5 6.5" stroke="#fff" strokeWidth="1.5" fill="none" /></svg></TrayItem>
        <TrayItem aria-label="QQ">
          <svg width="16" height="16"><ellipse cx="7" cy="5" rx="4" ry="5" fill="#0a0a0a" /><ellipse cx="7" cy="10" rx="6" ry="5" fill="#0a0a0a" /><ellipse cx="7" cy="11" rx="4" ry="4" fill="#fff" /><path d="M3 7H11V10H3Z" fill="#d5202c" /><circle cx="5.5" cy="4" r="1" fill="#fff" /><circle cx="8.5" cy="4" r="1" fill="#fff" /><circle cx="12" cy="12" r="4" fill="#e98a86" /></svg>
        </TrayItem>
        <TrayItem aria-label="网络"><svg width="16" height="14" fill="none" stroke="#fff"><path d="M4.5 1.5H15.5V9.5H4.5M10 10V13M6 13.5H13M0.5 0.5H4.5V4.5H0.5ZM2.5 5V12" /></svg></TrayItem>
        <TrayItem aria-label="音量"><svg width="17" height="14" fill="none" stroke="#fff"><path d="M0.5 5V9H3L7 13V1L3 5ZM9 5Q10.5 7 9 9M11 3Q14 7 11 11" /><path d="M13.5 1Q18 7 13.5 13" stroke="#7d8989" /></svg></TrayItem>
        <TrayItem>中</TrayItem>
        <TrayItem $wide aria-label="通知">
          <svg width="28" height="26">
            <path d="M2 1H18V13H8L5 16V13H2Z" fill="#fff" /><path d="M5 4.5H15M5 7.5H15M5 10.5H12" stroke="#203333" />
            <circle cx="17.5" cy="16.5" r="7.5" fill="#3a4748" stroke="#93a0a0" />
            <text x="14" y="21" fontSize="12" fontWeight="700" fill="#fff">5</text>
          </svg>
        </TrayItem>
      </Tray>
      <Desktop aria-label="显示桌面" />
    </TaskBar>
  </>
);

export default function App() {
  return (
    <Screen>
      <GlobalStyle />
      <Terminal>
        <Header />
        <Body>
          <Nav>
            {navItems.map((n) => (
              <NavLink key={n.text} href="#" $active={n.active} $color={n.color}>{n.text}</NavLink>
            ))}
          </Nav>
          <Work>
            <TabBar>
              {["自选股行情", "自选板块指数", "自定义板块", "最近浏览", "持仓股行情", "清仓股回看"].map((t) => (
                <Tab key={t} $active={t === "自定义板块"}>{t}</Tab>
              ))}
              <CloseLink>关闭</CloseLink>
            </TabBar>
            <Panes>
              <Blocks>
                <BlockRow><Caret><svg width="12" height="6"><path d="M2 0H10L6 6Z" fill="#c4c4c4" /></svg></Caret>自定义板块<RowEnd $icon><Plus /></RowEnd></BlockRow>
                <BlockRow $strong><Caret />打板(0)<RowEnd>0.00%</RowEnd></BlockRow>
                <BlockRow><Caret />问小达板块<RowEnd $icon><Plus /></RowEnd></BlockRow>
                <BlockRow>
                  <Caret />自动选股板块
                  <RowEnd $icon><svg width="14" height="14" fill="none" stroke="#c4c4c4"><path d="M4 1H10L13.5 7L10 13H4L0.5 7Z" /><circle cx="7" cy="7" r="2.5" /></svg></RowEnd>
                </BlockRow>
              </Blocks>
              <Quotes>
                <QuoteTable>
                  <colgroup>{columns.map(([t, w]) => <col key={t} width={w} />)}<col /></colgroup>
                  <thead><tr>{columns.map(([t]) => <th key={t}>{t}</th>)}<th /></tr></thead>
                  <tbody><tr><td colSpan={columns.length + 1}>打板 板块中没有品种</td></tr></tbody>
                </QuoteTable>
                <BlockTab>打板</BlockTab>
              </Quotes>
              <ChartColumn />
            </Panes>
          </Work>
        </Body>
        <Dialogs />
      </Terminal>
      <Footers />
    </Screen>
  );
}
